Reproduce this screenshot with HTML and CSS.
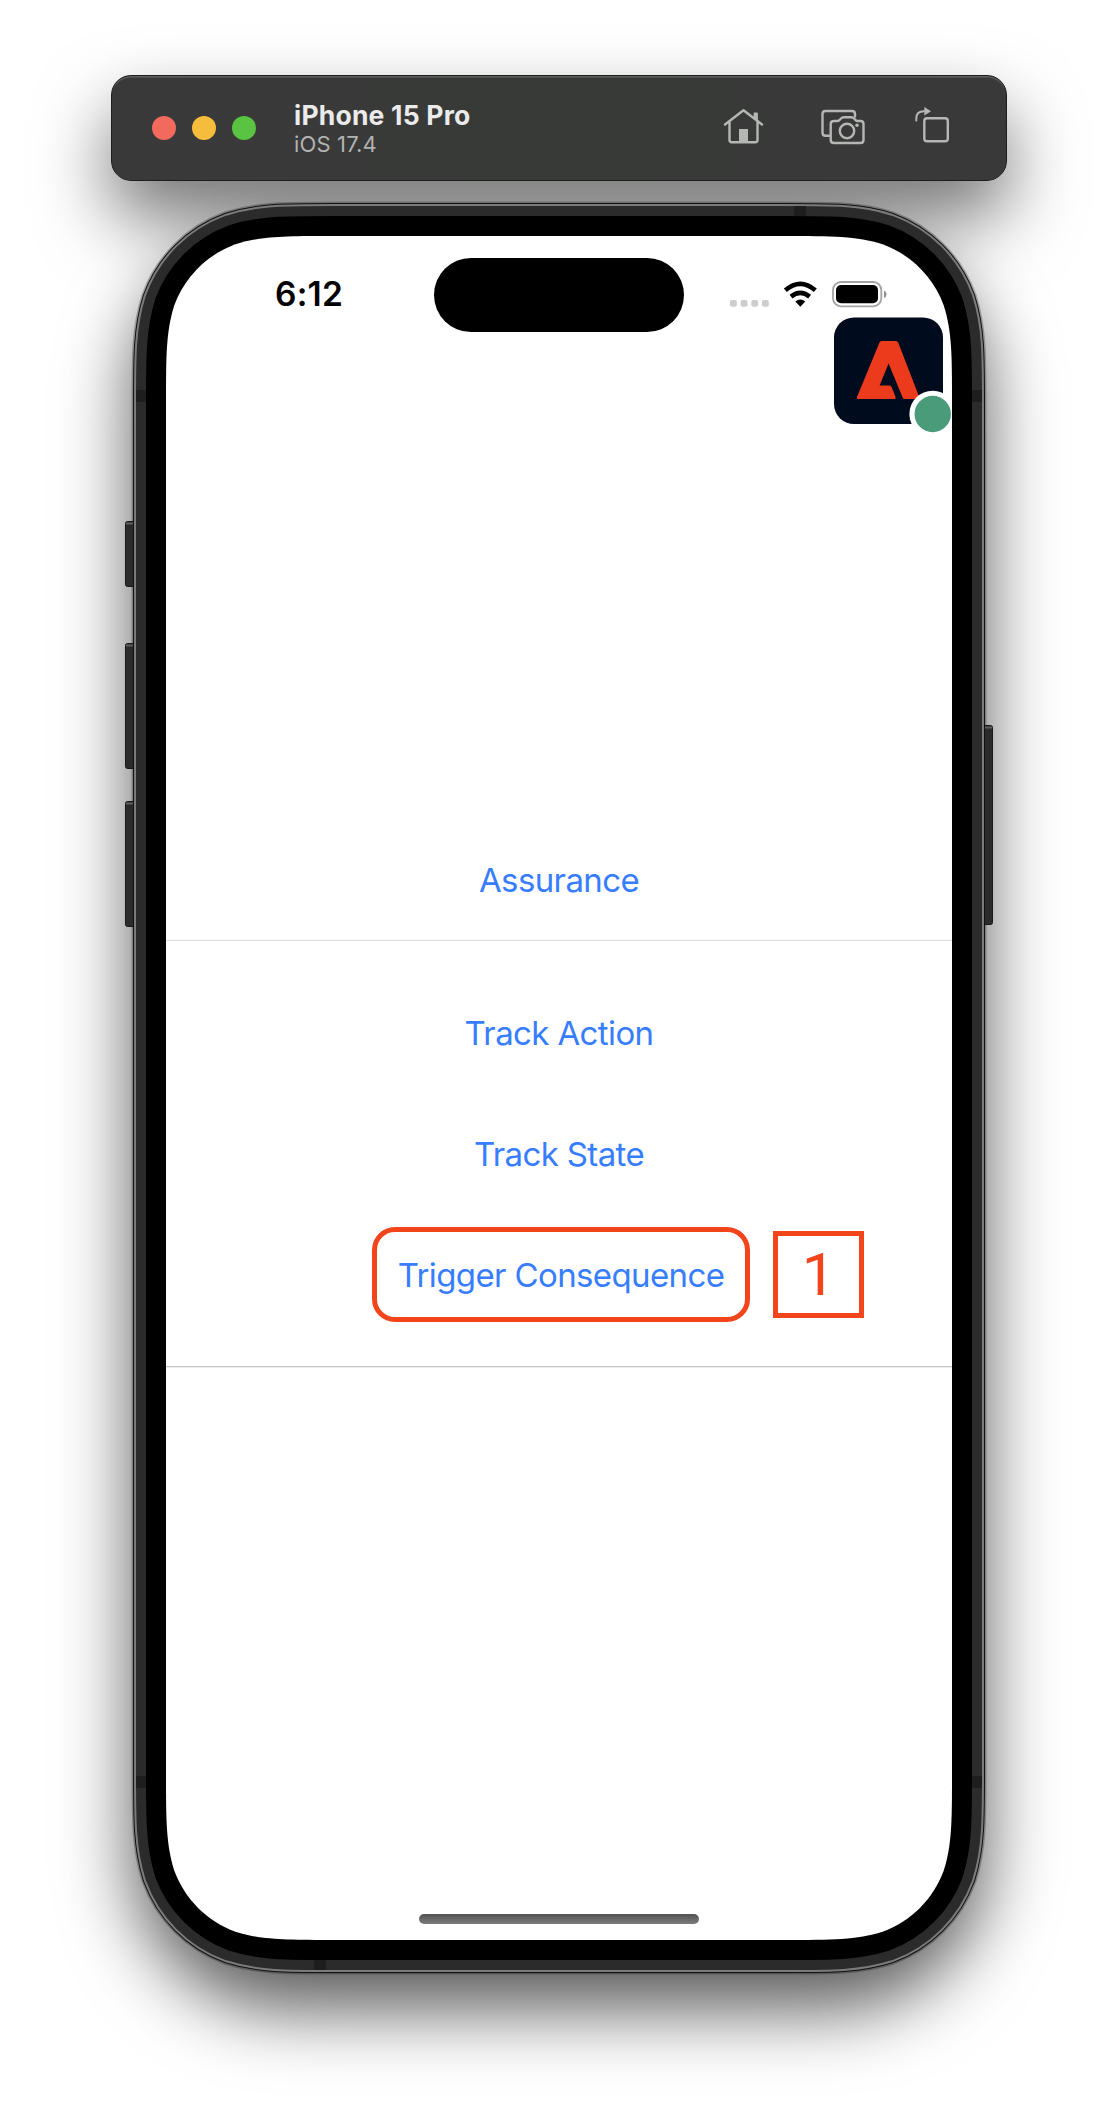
FILE: index.html
```html
<!DOCTYPE html>
<html lang="en">
<head>
<meta charset="utf-8">
<title>iPhone 15 Pro</title>
<link rel="stylesheet" href="styles.css">
</head>
<body>
<header class="toolbar">
  <div class="lights">
    <span class="light red"></span><span class="light yellow"></span><span class="light green"></span>
  </div>
  <div class="titles">
    <span class="title">iPhone 15 Pro</span>
    <span class="subtitle">iOS 17.4</span>
  </div>
  <svg class="tools" width="226" height="40" viewBox="0 0 226 40" fill="none" stroke="#b5b7b5" stroke-width="2.4" stroke-linecap="round" stroke-linejoin="round">
    <path d="M2 17.500 20.500 3.300 39 17.500M6.500 15V33Q6.500 35.200 8.700 35.200H32.300Q34.500 35.200 34.500 33V15"/>
    <path d="M31.500 6.500H34V13L31.500 11Z" fill="#b5b7b5" stroke-width="1.800"/>
    <path d="M16 22H25V35H16Z" fill="#b5b7b5" stroke="none"/>
    <path d="M106 28.700H102.500Q99.500 28.700 99.500 25.700V7Q99.500 4 102.500 4H129Q132 4 132 7V9.500"/>
    <path d="M111 14H114.500Q116 14 117 12.500L118 11.500Q119 10.200 121 10.200H128Q130 10.200 131 11.500L132 12.500Q133 14 134.500 14H137.500Q140.500 14 140.500 17V33Q140.500 36 137.500 36H111Q107.700 36 107.700 33V17Q107.700 14 111 14Z"/>
    <circle cx="124" cy="24" r="7.200"/>
    <circle cx="134" cy="18.300" r="1.700" fill="#b5b7b5" stroke="none"/>
    <rect x="201.300" y="11.300" width="23.500" height="23" rx="2.800"/>
    <path d="M193.300 13.500V11.500Q193.300 4.200 201 4.200" stroke-width="2"/>
    <path d="M201.300 0 208 4.300 201.300 8.600Z" fill="#b5b7b5" stroke="none"/>
  </svg>
</header>

<main class="phone">
  <svg class="frame" width="876" height="1770" viewBox="121 203 876 1770">
    <defs>
      <path id="body" d="M334.150 236H783.850C832.270 236 856.470 236 882.540 244.240C910.990 254.600 933.400 277.010 943.760 305.460C952 331.530 952 355.730 952 404.150V1771.850C952 1820.270 952 1844.470 943.760 1870.540C933.400 1898.990 910.990 1921.400 882.540 1931.760C856.470 1940 832.270 1940 783.850 1940H334.150C285.730 1940 261.530 1940 235.460 1931.760C207.010 1921.400 184.600 1898.990 174.240 1870.540C166 1844.470 166 1820.270 166 1771.850V404.150C166 355.730 166 331.530 174.240 305.460C184.600 277.010 207.010 254.600 235.460 244.240C261.530 236 285.730 236 334.150 236Z"/>
    </defs>
    <use href="#body" stroke="#000" stroke-opacity=".25" stroke-width="69"/>
    <g fill="#2b2b2b" stroke="#191919">
      <rect x="125.500" y="521.500" width="14" height="65" rx="2"/>
      <rect x="125.500" y="643.500" width="14" height="125" rx="2"/>
      <rect x="125.500" y="801.500" width="14" height="125" rx="2"/>
      <rect x="979.500" y="725.500" width="13" height="199" rx="2"/>
    </g>
    <path d="M126 523.500H134M126 645.500H134M126 803.500H134M984 727.500H992" stroke="#5c5c5c" stroke-width="2"/>
    <use href="#body" stroke="#111" stroke-width="66"/>
    <use href="#body" stroke="#7b7b7b" stroke-width="64"/>
    <use href="#body" stroke="#2b2b2b" stroke-width="60"/>
    <path d="M794 206H806V216H794ZM136 390H146V402H136ZM972 390H982V402H972ZM136 1776H146V1788H136ZM972 1776H982V1788H972ZM314 1960H326V1970H314Z" fill="#1e1e1e"/>
    <use href="#body" stroke="#000" stroke-width="40"/>
    <use href="#body" fill="#fff"/>
  </svg>
  <div class="screen">
    <div class="status">
      <span class="time">6:12</span>
      <span class="island"></span>
      <svg class="indicators" width="160" height="30" viewBox="728 279 160 30">
        <g fill="#cdcdcd">
          <rect x="730" y="300" width="6.800" height="6.800" rx="1.800"/><rect x="740.700" y="300" width="6.800" height="6.800" rx="1.800"/><rect x="751.300" y="300" width="6.800" height="6.800" rx="1.800"/><rect x="762" y="300" width="6.800" height="6.800" rx="1.800"/>
        </g>
        <path d="M785.300 290.300Q800.300 277.500 815.300 290.300M791 296.600Q800.300 289 809.600 296.600" fill="none" stroke="#000" stroke-width="4.600"/>
        <path d="M795.300 301.600Q800.300 297.300 805.300 301.600L800.300 306.700Z"/>
        <rect x="833" y="282" width="48.300" height="24.300" rx="8" fill="none" stroke="#a3a3a3" stroke-width="1.800"/>
        <rect x="836" y="285" width="42" height="18.300" rx="5"/>
        <path d="M884 290.500Q886.500 291.500 886.500 294.200T884 298Z" fill="#909090"/>
      </svg>
    </div>
    <svg class="assurance-badge" width="119" height="118" viewBox="833 316 119 118">
      <rect x="834" y="317.500" width="109" height="106.500" rx="20" fill="#000b1d"/>
      <path d="M881.500 341H896Q897.500 341 898.200 342.500L920 399H905Q903.300 399 902.600 397.500L888.600 363.500 879.600 385.500H889.500Q891 385.500 891.600 387L895.600 397Q896.200 399 894.500 399H858Q856.300 399 857 397L879.500 342.500Q880.200 341 881.500 341Z" fill="#eb3a1c"/>
      <circle cx="932.700" cy="414" r="23.300" fill="#fff"/>
      <circle cx="932.700" cy="414" r="18.200" fill="#499b79"/>
    </svg>
    <nav class="actions">
      <button class="action">Assurance</button>
      <hr class="rule">
      <button class="action">Track Action</button>
      <button class="action">Track State</button>
      <div class="marked-row">
        <button class="action marked">Trigger Consequence</button>
        <span class="step">1</span>
      </div>
      <hr class="rule strong">
    </nav>
    <span class="home-indicator"></span>
  </div>
</main>
</body>
</html>
```
FILE: styles.css
```css
* { box-sizing: border-box; }

body {
  margin: 0;
  height: 2124px;
  padding: 75px 111px 0;
  background: #fff;
  font-family: Inter, "Liberation Sans", sans-serif;
  overflow: hidden;
}

.toolbar {
  width: 896px;
  height: 106px;
  padding: 0 57px 0 40px;
  display: flex;
  align-items: center;
  border-radius: 20px;
  border: 1px solid #1c1d1c;
  background: linear-gradient(90deg, #393939, #383a38 40%, #383a38 60%, #393939);
  box-shadow: inset 0 2px 0 -0.5px #5e605e, 0 36px 72px rgba(0, 0, 0, .55);
}

.lights { display: flex; gap: 16px; }
.light { width: 24px; height: 24px; border-radius: 50%; }
.red { background: #f16a5d; }
.yellow { background: #f5bd3b; }
.green { background: #5ac442; }

.titles {
  display: flex;
  flex-direction: column;
  margin-left: 38px;
  flex: 1;
}
.title { font-size: 26.500px; line-height: 32px; font-weight: 700; color: #ebebeb; letter-spacing: .2px; }
.subtitle { font-size: 22px; line-height: 26px; color: #b1b2b1; letter-spacing: .15px; }
.tools { margin-bottom: 2px; }

.phone {
  position: relative;
  width: 852px;
  height: 1770px;
  margin: 22px 0 0 22px;
  padding: 33px;
}
.phone::before {
  content: "";
  position: absolute;
  inset: 8px;
  z-index: -1;
  border-radius: 145px;
  box-shadow: 0 36px 72px 8px rgba(0, 0, 0, .65);
}
.frame { position: absolute; left: -12px; top: 0; fill: none; overflow: visible; }

.screen {
  position: relative;
  width: 786px;
  height: 1704px;
  display: flex;
  flex-direction: column;
}

.status {
  height: 80px;
  padding: 22px 64px 0 109px;
  display: flex;
}
.time { width: 159px; margin-top: 16px; font-size: 33.500px; line-height: 40px; font-weight: 600; letter-spacing: .2px; }
.island { width: 250px; height: 74px; border-radius: 37px; background: #000; }
.indicators { margin: 21px 0 0 44px; flex: none; }

.assurance-badge { align-self: flex-end; }

.actions { margin-top: 385px; display: flex; flex-direction: column; }
.action {
  height: 121px;
  padding: 0;
  border: 0;
  background: none;
  color: #377dff;
  font: 400 33px/40px Inter, "Liberation Sans", sans-serif;
  letter-spacing: -.62px;
}
.rule { width: 100%; height: 1px; margin: 0 0 31px; border: 0; background: #dcdcdc; }
.rule.strong { height: 2px; margin: 44px 0 0; background: #c6c6c6; border-bottom: 1px solid #ededed; }

.marked-row { display: flex; align-items: center; margin: 13px 0 0 206px; gap: 23px; }
.action.marked {
  width: 378px;
  height: 95px;
  border: 5px solid #f2451c;
  border-radius: 23px;
}
.step {
  width: 91px;
  height: 87px;
  border: 5px solid #f2451c;
  color: #f2451c;
  font: 400 60px/77px Roboto, sans-serif;
  text-align: center;
}

.home-indicator {
  width: 280px;
  height: 10px;
  margin: auto auto 16px;
  border-radius: 5px;
  background: linear-gradient(#525252, #7c7c7c);
}
```
